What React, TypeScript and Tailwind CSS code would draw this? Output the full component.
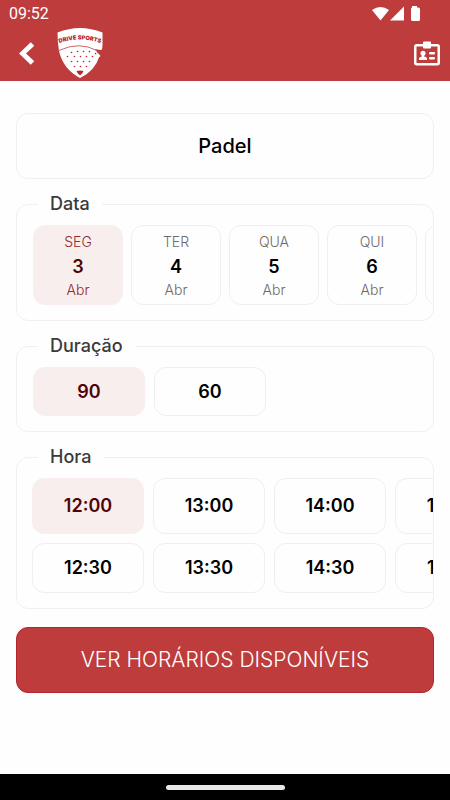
import { useState } from "react";
import clsx from "clsx";

const DAYS = [
  { weekday: "SEG", day: "3", month: "Abr" },
  { weekday: "TER", day: "4", month: "Abr" },
  { weekday: "QUA", day: "5", month: "Abr" },
  { weekday: "QUI", day: "6", month: "Abr" },
  { weekday: "SEX", day: "7", month: "Abr" },
];

const DURATIONS = ["90", "60"];

const FULL_HOURS = ["12:00", "13:00", "14:00", "15:00"];
const HALF_HOURS = ["12:30", "13:30", "14:30", "15:30"];

const LOGO_DOTS = [
  [20, 23], [26, 23], [32, 23],
  [14, 24], [38, 25],
  [10, 28], [17, 28], [23, 28], [29, 28], [35, 28],
  [14, 33], [20, 33], [26, 33], [32, 33],
  [17, 38], [23, 38], [29, 38],
];

function Logo() {
  return (
    <svg width="46" height="50" viewBox="0 0 46 50" role="img" aria-label="Drive Sports">
      <path
        d="M0.500 4.500Q12 0 23 0T45.500 4.500V17Q45.500 20 44.500 22L38.500 21.500L42.500 28Q38 43 23 50Q6 41 2 23Q0.500 14 0.500 4.500Z"
        fill="#fff"
      />
      <path d="M2 22.500Q22 13 40 22.500" fill="none" stroke="#be3c3c" strokeWidth="0.800" />
      <path d="M38 21.500L46 22.500L43 27Z" fill="#be3c3c" />
      <path d="M41 25L43.500 28L41 30Z" fill="#fff" />
      <path id="logo-arc" d="M2.500 15Q23 8 43.500 15" fill="none" />
      <text
        fill="#b8262b"
        fontFamily="Inter, Liberation Sans, sans-serif"
        fontSize="5.700"
        fontWeight="900"
        textAnchor="middle"
      >
        <textPath href="#logo-arc" startOffset="50%">
          DRIVE SPORTS
        </textPath>
      </text>
      {LOGO_DOTS.map(([cx, cy]) => (
        <circle key={`${cx}-${cy}`} cx={cx + 0.5} cy={cy + 0.5} r="0.800" fill="#b8262b" />
      ))}
      <path d="M19.500 43L23 42.500L26.500 43L25.500 45L23 47.500L20.500 45Z" fill="#b8262b" />
    </svg>
  );
}

function StatusIcons() {
  return (
    <svg width="49" height="16" viewBox="0 0 49 16" fill="#fff" aria-hidden="true">
      <path d="M0 4Q8.500-2 17 4L8.500 14.500Z" />
      <path d="M32 0.500V14.500H18Z" />
      <path d="M40 1.500V0H45V1.500H46.500Q48 1.500 48 3V13.500Q48 15 46.500 15H40.500Q39 15 39 13.500V3Q39 1.500 40 1.500Z" />
    </svg>
  );
}

function BadgeIcon() {
  return (
    <svg width="26" height="25" viewBox="0 0 26 25" fill="#fff" aria-hidden="true">
      <rect x="1.250" y="4.250" width="23.500" height="19" rx="1.500" fill="none" stroke="#fff" strokeWidth="2.500" />
      <rect x="9" y="0.500" width="8" height="7" rx="1" />
      <circle cx="9" cy="12.300" r="2.500" />
      <path d="M7.800 13H10.200V15.500Q13 16 13 17.500V19H5V17.500Q5 16 7.800 15.500Z" />
      <rect x="15" y="11" width="6" height="2.500" rx="1" />
      <rect x="15" y="16" width="6" height="2.500" rx="1" />
    </svg>
  );
}

function Group({ title, children }: { title: string; children: React.ReactNode }) {
  return (
    <fieldset className="mt-[13px] min-w-0 rounded-xl border border-[#f0f0f0] bg-[#fefefe]">
      <legend className="ml-[21px] px-3 text-lg leading-6 font-medium text-[#3a3a3a]">{title}</legend>
      <div className="overflow-x-auto pt-[9px] pb-[15px] pl-[15px] [scrollbar-width:none]">{children}</div>
    </fieldset>
  );
}

function Option({
  selected,
  onClick,
  className,
  children,
}: {
  selected: boolean;
  onClick: () => void;
  className: string;
  children: React.ReactNode;
}) {
  return (
    <button
      type="button"
      aria-pressed={selected}
      onClick={onClick}
      className={clsx(
        "shrink-0 rounded-xl border text-lg font-semibold",
        selected ? "border-[#f9eeee] bg-[#f9eeee] text-[#4d0508]" : "border-[#efefef] bg-[#fefefe] text-black",
        className
      )}
    >
      {children}
    </button>
  );
}

export default function App() {
  const [day, setDay] = useState("3");
  const [duration, setDuration] = useState("90");
  const [hour, setHour] = useState("12:00");

  return (
    <div className="flex min-h-screen flex-col bg-[#fefefe] font-['Inter','Liberation_Sans',sans-serif]">
      <header className="bg-[#be3c3c] text-white">
        <div className="flex h-7 items-center justify-between pr-[29px] pl-[9px]">
          <span className="font-['Roboto',sans-serif] text-base">09:52</span>
          <StatusIcons />
        </div>
        <div className="flex h-[53px] items-center pr-[10px] pb-[3px] pl-[19px]">
          <button type="button" aria-label="Voltar">
            <svg width="15" height="23" viewBox="0 0 15 23" fill="none" stroke="#fff" strokeWidth="5">
              <path d="M13.500 2L3.500 11.500L13.500 21" />
            </svg>
          </button>
          <div className="ml-[23px]">
            <Logo />
          </div>
          <button type="button" aria-label="Perfil" className="ml-auto">
            <BadgeIcon />
          </button>
        </div>
      </header>

      <main className="flex-1 px-4 pt-8">
        <button
          type="button"
          className="h-[66px] w-full rounded-xl border border-[#f0f0f0] bg-[#fefefe] text-xl font-medium text-black"
        >
          Padel
        </button>

        <Group title="Data">
          <div className="flex gap-2 pl-px">
            {DAYS.map((item) => (
              <Option
                key={item.day}
                selected={day === item.day}
                onClick={() => setDay(item.day)}
                className="flex h-20 w-[90px] flex-col items-center justify-center"
              >
                <span
                  className={clsx(
                    "text-sm leading-[22px] font-light",
                    day === item.day ? "text-[#8f2b30]" : "text-[#6b6b6b]"
                  )}
                >
                  {item.weekday}
                </span>
                <span className="leading-7">{item.day}</span>
                <span
                  className={clsx(
                    "text-sm leading-[18px] font-light",
                    day === item.day ? "text-[#8f2b30]" : "text-[#6b6b6b]"
                  )}
                >
                  {item.month}
                </span>
              </Option>
            ))}
          </div>
        </Group>

        <Group title="Duração">
          <div className="flex gap-[9px] pl-px">
            {DURATIONS.map((item) => (
              <Option
                key={item}
                selected={duration === item}
                onClick={() => setDuration(item)}
                className="h-[49px] w-28"
              >
                {item}
              </Option>
            ))}
          </div>
        </Group>

        <Group title="Hora">
          <div className="flex flex-col gap-[9px]">
            <div className="flex gap-[9px]">
              {FULL_HOURS.map((item) => (
                <Option key={item} selected={hour === item} onClick={() => setHour(item)} className="h-14 w-28">
                  {item}
                </Option>
              ))}
            </div>
            <div className="flex gap-[9px]">
              {HALF_HOURS.map((item) => (
                <Option key={item} selected={hour === item} onClick={() => setHour(item)} className="h-[50px] w-28">
                  {item}
                </Option>
              ))}
            </div>
          </div>
        </Group>

        <button
          type="button"
          className="mt-[18px] mb-8 h-[66px] w-full rounded-xl border border-[#b5262a] bg-[#be3c3c] text-[21px] font-light text-white"
        >
          VER HORÁRIOS DISPONÍVEIS
        </button>
      </main>

      <footer className="flex h-[26px] items-center justify-center bg-black">
        <div className="h-[5px] w-[119px] rounded-full bg-[#e8e8e8]" />
      </footer>
    </div>
  );
}
